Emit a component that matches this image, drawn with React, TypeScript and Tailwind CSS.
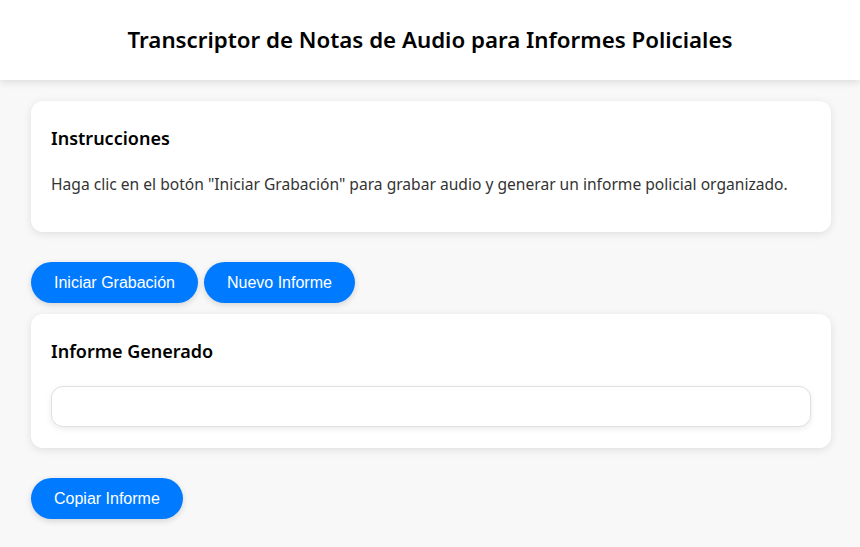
import React from "react";

const sans = "font-['Noto_Sans','Open_Sans',sans-serif]";
const btn =
  "h-[41px] rounded-full bg-[#007bff] px-[23px] text-[16px] text-white font-['Liberation_Sans',Arial,sans-serif] shadow-[0_2px_6px_rgba(0,0,0,0.15)]";

export default function App() {
  return (
    <div className={`min-h-[547px] bg-[#f8f8f8] ${sans}`}>
      <header className="flex h-[80px] items-center justify-center bg-white shadow-[0_2px_8px_rgba(0,0,0,0.12)]">
        <h1 className="text-[22.3px] font-semibold text-black">
          Transcriptor de Notas de Audio para Informes Policiales
        </h1>
      </header>

      <main className="pl-[31px] pr-[29px] pt-[21px] pb-[28px]">
        <section className="rounded-[12px] bg-white px-5 pt-6 pb-[37px] shadow-[0_2px_8px_rgba(0,0,0,0.1)]">
          <h2 className="text-[18px] leading-[27px] font-semibold text-black">
            Instrucciones
          </h2>
          <p className="mt-[21px] text-[15.6px] leading-[22px] text-[#333]">
            Haga clic en el botón "Iniciar Grabación" para grabar audio y
            generar un informe policial organizado.
          </p>
        </section>

        <div className="mt-[30px] flex gap-[6px]">
          <button className={btn}>Iniciar Grabación</button>
          <button className={btn}>Nuevo Informe</button>
        </div>

        <section className="mt-[11px] rounded-[12px] bg-white px-5 pt-6 pb-[21px] shadow-[0_2px_8px_rgba(0,0,0,0.1)]">
          <h2 className="text-[18px] leading-[27px] font-semibold text-black">
            Informe Generado
          </h2>
          <div className="mt-[21px] h-[41px] rounded-[12px] border border-[#e0e0e0] bg-white shadow-[0_2px_6px_rgba(0,0,0,0.08)]" />
        </section>

        <div className="mt-[30px]">
          <button className={btn}>Copiar Informe</button>
        </div>
      </main>
    </div>
  );
}
